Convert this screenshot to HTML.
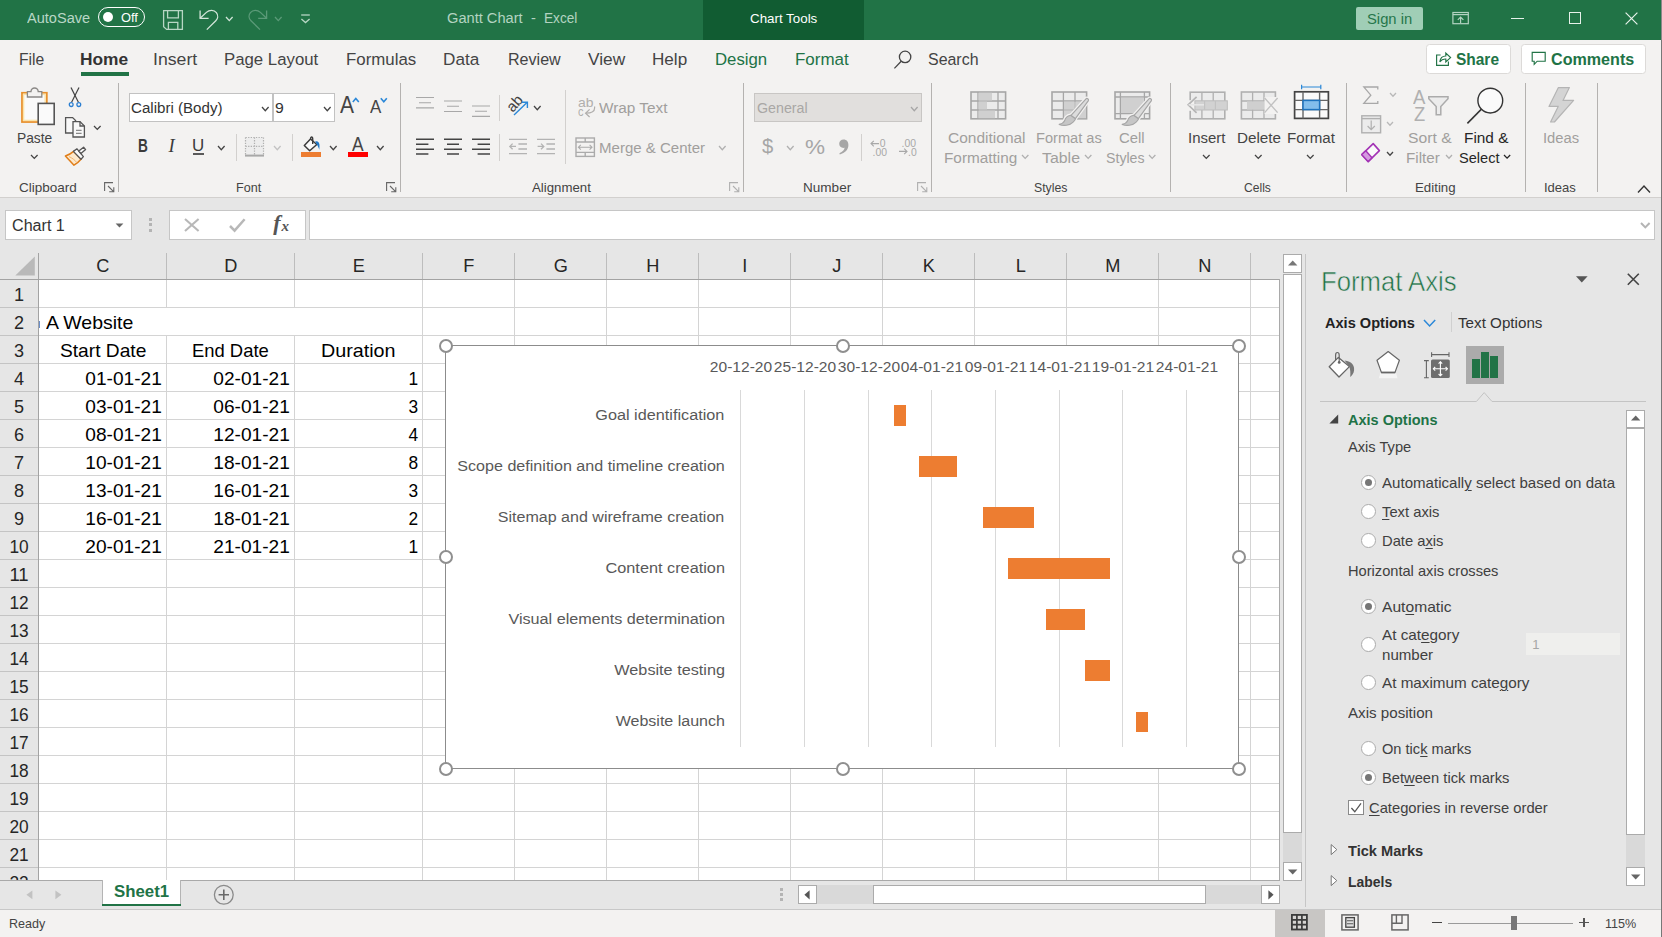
<!DOCTYPE html>
<html lang="en"><head><meta charset="utf-8"><title>Gantt Chart - Excel</title>
<style>
html,body{margin:0;padding:0;}
body{width:1662px;height:937px;overflow:hidden;position:relative;background:#e6e6e6;font-family:"Liberation Sans",sans-serif;}
.a{position:absolute;box-sizing:border-box;}
.t{position:absolute;white-space:nowrap;}
svg{overflow:visible;}
u{text-decoration:underline;text-underline-offset:2px;text-decoration-thickness:1px;}
</style></head>
<body>
<div class="a titlebar" style="left:0px;top:0px;width:1662px;height:40px;background:#217346;">
<span class="t" style="top:10px;font-size:14.9px;line-height:16px;color:#b9d7c6;left:26.68px;transform-origin:0 0;transform:scaleX(0.9778);">AutoSave</span>
<div class="a" style="left:97.8px;top:7px;width:47.2px;height:20.2px;border:1.4px solid #fff;border-radius:10.1px;"></div>
<div class="a" style="left:102.9px;top:11.9px;width:10.2px;height:10.2px;background:#fff;border-radius:5.1px;"></div>
<span class="t" style="top:10px;font-size:12.9px;line-height:15px;color:#fff;left:121.25px;transform-origin:0 0;transform:scaleX(0.9961);">Off</span>
<svg class="a" style="left:162px;top:9px;" width="22" height="22" viewBox="0 0 22 22"><g fill="none" stroke="#b7d6c4" stroke-width="1.3"><path d="M1.6 1.6 H20.4 V20.4 H4.6 L1.6 17.8 Z"/><path d="M5.6 1.6 V8.8 H16.4 V1.6"/><path d="M6.4 20.4 V13.4 H15.8 V20.4"/></g></svg>
<svg class="a" style="left:198px;top:9px;" width="22" height="22" viewBox="0 0 22 22"><g fill="none" stroke="#d3e6da" stroke-width="1.3"><path d="M2.1 1.4 V9.3 H10.6"/><path d="M2.1 9.3 L8.4 3.4 C11.4 0.6 16 0.6 18.4 3.6 C20.4 6.2 20 9.6 17.8 11.8 L8.8 20.6"/></g></svg>
<svg class="a" style="left:225.1px;top:15.6px;" width="8.6" height="5.6" viewBox="0 0 8.6 5.6"><path d="M1 1 L4.3 4.6 L7.6 1" fill="none" stroke="#d3e6da" stroke-width="1.3"/></svg>
<svg class="a" style="left:248px;top:9px;" width="22" height="22" viewBox="0 0 22 22"><g fill="none" stroke="#5b9a78" stroke-width="1.3"><path d="M18.6 1.4 V9.3 H10.2"/><path d="M18.6 9.3 L12.4 3.4 C9.4 0.6 4.8 0.6 2.4 3.6 C0.4 6.2 0.8 9.6 3 11.8 L12 20.6"/></g></svg>
<svg class="a" style="left:274.2px;top:15.6px;" width="8.6" height="5.6" viewBox="0 0 8.6 5.6"><path d="M1 1 L4.3 4.6 L7.6 1" fill="none" stroke="#5b9a78" stroke-width="1.3"/></svg>
<svg class="a" style="left:299px;top:13px;" width="14" height="12" viewBox="0 0 14 12"><g fill="none" stroke="#b7d6c4" stroke-width="1.3"><path d="M2.2 2 H10.8"/><path d="M2.4 6 L6.5 9.6 L10.6 6"/></g></svg>
<span class="t" style="top:10px;font-size:14.9px;line-height:16px;color:#b3d3c1;left:446.68px;transform-origin:0 0;transform:scaleX(0.9826);">Gantt Chart</span>
<span class="t" style="top:10px;font-size:14.9px;line-height:16px;color:#b3d3c1;left:530.7px;transform-origin:0 0;transform:scaleX(0.9854);">-</span>
<span class="t" style="top:10px;font-size:14.9px;line-height:16px;color:#b3d3c1;left:544.38px;transform-origin:0 0;transform:scaleX(0.9155);">Excel</span>
<div class="a" style="left:703px;top:0px;width:161px;height:40px;background:#115c32;"></div>
<span class="t" style="top:11px;font-size:12.9px;line-height:15px;color:#fff;left:749.95px;transform-origin:0 0;transform:scaleX(1.0359);">Chart Tools</span>
<div class="a" style="left:1356px;top:6.8px;width:67px;height:23.1px;background:#a0ceb6;border-radius:2px;"></div>
<span class="t" style="top:10px;font-size:15.3px;line-height:17px;color:#26774b;left:1366.76px;transform-origin:0 0;transform:scaleX(0.9656);">Sign in</span>
<svg class="a" style="left:1451px;top:11px;" width="19" height="15" viewBox="0 0 19 15"><g fill="none" stroke="#b3d3c1" stroke-width="1.2"><rect x="1.9" y="1.5" width="15.4" height="11.2"/><path d="M1.9 3.6 H17.3"/><path d="M9.6 12 V6.2 M6.8 8.8 L9.6 6 L12.4 8.8"/></g></svg>
<div class="a" style="left:1511px;top:17.5px;width:13px;height:1.2px;background:#e6f1ea;"></div>
<div class="a" style="left:1568.5px;top:12px;width:12px;height:12px;border:1.2px solid #e6f1ea;"></div>
<svg class="a" style="left:1625px;top:11.5px;" width="13" height="13" viewBox="0 0 13 13"><path d="M0.6 0.6 L12.4 12.4 M12.4 0.6 L0.6 12.4" stroke="#e6f1ea" stroke-width="1.2" fill="none"/></svg>
<div class="a" style="left:1661px;top:0px;width:1px;height:40px;background:#8c888a;"></div>
</div>
<div class="a ribbon" style="left:0px;top:40px;width:1662px;height:157px;background:#f3f2f1;">
<span class="t" style="top:9px;font-size:17.2px;line-height:20px;color:#444;left:19.4px;transform-origin:0 0;transform:scaleX(0.9098);">File</span>
<span class="t" style="top:9px;font-size:17.2px;line-height:20px;color:#333;font-weight:bold;left:80.4px;transform-origin:0 0;transform:scaleX(1.0092);">Home</span>
<div class="a" style="left:81px;top:32px;width:48px;height:3.6px;background:#217346;"></div>
<span class="t" style="top:9px;font-size:17.2px;line-height:20px;color:#444;left:153.4px;transform-origin:0 0;transform:scaleX(1.0280);">Insert</span>
<span class="t" style="top:9px;font-size:17.2px;line-height:20px;color:#444;left:224.4px;transform-origin:0 0;transform:scaleX(0.9759);">Page Layout</span>
<span class="t" style="top:9px;font-size:17.2px;line-height:20px;color:#444;left:346.4px;transform-origin:0 0;transform:scaleX(0.9799);">Formulas</span>
<span class="t" style="top:9px;font-size:17.2px;line-height:20px;color:#444;left:443.4px;transform-origin:0 0;transform:scaleX(0.9970);">Data</span>
<span class="t" style="top:9px;font-size:17.2px;line-height:20px;color:#444;left:507.9px;transform-origin:0 0;transform:scaleX(0.9351);">Review</span>
<span class="t" style="top:9px;font-size:17.2px;line-height:20px;color:#444;left:588.4px;transform-origin:0 0;transform:scaleX(1.0068);">View</span>
<span class="t" style="top:9px;font-size:17.2px;line-height:20px;color:#444;left:652.4px;transform-origin:0 0;transform:scaleX(0.9956);">Help</span>
<span class="t" style="top:9px;font-size:17.2px;line-height:20px;color:#217346;left:715.4px;transform-origin:0 0;transform:scaleX(0.9755);">Design</span>
<span class="t" style="top:9px;font-size:17.2px;line-height:20px;color:#217346;left:794.9px;transform-origin:0 0;transform:scaleX(0.9865);">Format</span>
<svg class="a" style="left:893px;top:10px;" width="20" height="20" viewBox="0 0 20 20"><g fill="none" stroke="#444" stroke-width="1.3"><circle cx="12.1" cy="6.9" r="5.7"/><path d="M8.2 11.2 L1.4 18.4"/></g></svg>
<span class="t" style="top:9px;font-size:17.2px;line-height:20px;color:#444;left:928.1px;transform-origin:0 0;transform:scaleX(0.9272);">Search</span>
<div class="a" style="left:1426px;top:4px;width:85px;height:30px;background:#fff;border:1px solid #dcdad8;border-radius:3.5px;"></div>
<svg class="a" style="left:1435px;top:10.4px;" width="17" height="17" viewBox="0 0 17 17"><g fill="none" stroke="#217346" stroke-width="1.15"><path d="M5.6 5 H1.6 V15.4 H13.4 V11.6"/><path d="M4.8 11.8 C5.4 7.8 8 6 10.8 6 V3 L15.6 7.6 L10.8 12 V9 C8.4 8.8 6.4 9.6 4.8 11.8 Z"/></g></svg>
<span class="t" style="top:9px;font-size:17.2px;line-height:20px;color:#217346;font-weight:bold;left:1456.4px;transform-origin:0 0;transform:scaleX(0.9000);">Share</span>
<div class="a" style="left:1521px;top:4px;width:125px;height:30px;background:#fff;border:1px solid #dcdad8;border-radius:3.5px;"></div>
<svg class="a" style="left:1531px;top:11.4px;" width="17" height="16" viewBox="0 0 17 16"><path d="M1.2 1.4 H14.2 V10.2 H6.2 L3.2 13.4 V10.2 H1.2 Z" fill="none" stroke="#217346" stroke-width="1.15"/></svg>
<span class="t" style="top:9px;font-size:17.2px;line-height:20px;color:#217346;font-weight:bold;left:1551.4px;transform-origin:0 0;transform:scaleX(0.9367);">Comments</span>
<div class="a" style="left:118px;top:43px;width:1px;height:109px;background:#b4b2b0;"></div>
<div class="a" style="left:400px;top:43px;width:1px;height:109px;background:#b4b2b0;"></div>
<div class="a" style="left:743px;top:43px;width:1px;height:109px;background:#b4b2b0;"></div>
<div class="a" style="left:931px;top:43px;width:1px;height:109px;background:#b4b2b0;"></div>
<div class="a" style="left:1170px;top:43px;width:1px;height:109px;background:#b4b2b0;"></div>
<div class="a" style="left:1346px;top:43px;width:1px;height:109px;background:#b4b2b0;"></div>
<div class="a" style="left:1525px;top:43px;width:1px;height:109px;background:#b4b2b0;"></div>
<div class="a" style="left:1597px;top:43px;width:1px;height:109px;background:#b4b2b0;"></div>
<span class="t" style="top:140px;font-size:12.9px;line-height:15px;color:#444;left:19.05px;transform-origin:0 0;transform:scaleX(1.0492);">Clipboard</span>
<span class="t" style="top:140px;font-size:12.9px;line-height:15px;color:#444;left:236.05px;transform-origin:0 0;transform:scaleX(0.9770);">Font</span>
<span class="t" style="top:140px;font-size:12.9px;line-height:15px;color:#444;left:531.55px;transform-origin:0 0;transform:scaleX(1.0275);">Alignment</span>
<span class="t" style="top:140px;font-size:12.9px;line-height:15px;color:#444;left:802.95px;transform-origin:0 0;transform:scaleX(1.0511);">Number</span>
<span class="t" style="top:140px;font-size:12.9px;line-height:15px;color:#444;left:1033.55px;transform-origin:0 0;transform:scaleX(0.9542);">Styles</span>
<span class="t" style="top:140px;font-size:12.9px;line-height:15px;color:#444;left:1244.15px;transform-origin:0 0;transform:scaleX(0.9388);">Cells</span>
<span class="t" style="top:140px;font-size:12.9px;line-height:15px;color:#444;left:1414.55px;transform-origin:0 0;transform:scaleX(1.0300);">Editing</span>
<span class="t" style="top:140px;font-size:12.9px;line-height:15px;color:#444;left:1544.15px;transform-origin:0 0;transform:scaleX(1.0113);">Ideas</span>
<svg class="a" style="left:103.5px;top:142px;" width="11" height="11" viewBox="0 0 11 11"><g fill="none" stroke="#666" stroke-width="1.1"><path d="M0.6 9 V0.6 H9"/><path d="M4 4 L9.6 9.6 M9.8 5.2 V9.8 H5.2"/></g></svg>
<svg class="a" style="left:385.8px;top:142px;" width="11" height="11" viewBox="0 0 11 11"><g fill="none" stroke="#666" stroke-width="1.1"><path d="M0.6 9 V0.6 H9"/><path d="M4 4 L9.6 9.6 M9.8 5.2 V9.8 H5.2"/></g></svg>
<svg class="a" style="left:728.8px;top:142px;" width="11" height="11" viewBox="0 0 11 11"><g fill="none" stroke="#b0b0b0" stroke-width="1.1"><path d="M0.6 9 V0.6 H9"/><path d="M4 4 L9.6 9.6 M9.8 5.2 V9.8 H5.2"/></g></svg>
<svg class="a" style="left:916.6px;top:142px;" width="11" height="11" viewBox="0 0 11 11"><g fill="none" stroke="#b0b0b0" stroke-width="1.1"><path d="M0.6 9 V0.6 H9"/><path d="M4 4 L9.6 9.6 M9.8 5.2 V9.8 H5.2"/></g></svg>
<svg class="a" style="left:1637px;top:144px;" width="15" height="10" viewBox="0 0 15 10"><path d="M1 8.4 L7 2 L13 8.4" fill="none" stroke="#333" stroke-width="1.4"/></svg>
<svg class="a" style="left:19px;top:42px;" width="38" height="45" viewBox="0 0 38 45"><rect x="3" y="10.8" width="24.8" height="29.2" fill="#fafafa" stroke="#e8912d" stroke-width="1.8"/><rect x="4.6" y="12.4" width="21.6" height="26" fill="none" stroke="#fbe3a8" stroke-width="1.4"/><path d="M8.4 15 V9.6 H12 A3.6 3.6 0 0 1 19.2 9.6 H22.8 V15 Z" fill="#f3f2f1" stroke="#8a8886" stroke-width="1.3"/><rect x="19.2" y="21.4" width="16" height="21" fill="#fafafa" stroke="#555" stroke-width="1.6"/></svg>
<span class="t" style="top:89px;font-size:15.2px;line-height:17px;color:#444;left:16.77px;transform-origin:0 0;transform:scaleX(0.9078);">Paste</span>
<svg class="a" style="left:30.1px;top:113.7px;" width="8.6" height="5.4" viewBox="0 0 8.6 5.4"><path d="M1 1 L4.3 4.4 L7.6 1" fill="none" stroke="#444" stroke-width="1.3"/></svg>
<svg class="a" style="left:67px;top:46px;" width="16" height="23" viewBox="0 0 16 23"><g fill="none" stroke="#444" stroke-width="1.2"><path d="M4 1.6 L11.4 16.2"/><path d="M12 1.6 L4.6 16.2"/></g><g fill="#f3f2f1" stroke="#2b7fd1" stroke-width="1.3"><circle cx="4.2" cy="18.6" r="1.9"/><circle cx="11.8" cy="18.6" r="1.9"/></g></svg>
<svg class="a" style="left:64px;top:76px;" width="23" height="23" viewBox="0 0 23 23"><g fill="#f8f8f8" stroke="#555" stroke-width="1.3"><path d="M1.6 1.6 H8.6 L11.6 4.6 V17 H1.6 Z"/><path d="M9 5.6 H16 L20.4 10 V21 H9 Z"/><path d="M16 5.6 V10 H20.4" fill="none"/><path d="M12 14.4 H17.6 M12 17.4 H17.6" stroke="#888"/></g></svg>
<svg class="a" style="left:93.2px;top:84.9px;" width="8.6" height="5.4" viewBox="0 0 8.6 5.4"><path d="M1 1 L4.3 4.4 L7.6 1" fill="none" stroke="#444" stroke-width="1.3"/></svg>
<svg class="a" style="left:64px;top:106px;" width="23" height="21" viewBox="0 0 23 21"><path d="M1.4 10 C5 8.8 7.6 7.2 9.6 5.4 L17.2 13 C15.4 15.2 12.8 17.6 10 19.2 Z" fill="#fde9cc" stroke="#e07e1a" stroke-width="1.5" stroke-linejoin="round"/><path d="M5 10.6 C8 12 11 14 12.6 16.4" fill="none" stroke="#f3b56e" stroke-width="1"/><path d="M9.4 5.4 L13 2.8 L19.4 10.6 L17 13.2 Z" fill="#fafafa" stroke="#555" stroke-width="1.3" stroke-linejoin="round"/><path d="M14.8 5 L19.6 1.2 L21.6 3.6 L16.9 7.6 Z" fill="#fafafa" stroke="#555" stroke-width="1.3" stroke-linejoin="round"/></svg>
<div class="a" style="left:129.2px;top:53.2px;width:143.6px;height:28.4px;background:#fff;border:1px solid #c2c2c2;"></div>
<div class="a" style="left:273.3px;top:53.2px;width:61.6px;height:28.4px;background:#fff;border:1px solid #c2c2c2;"></div>
<span class="t" style="top:59px;font-size:15.4px;line-height:17px;color:#333;left:131.46px;transform-origin:0 0;transform:scaleX(0.9812);">Calibri (Body)</span>
<span class="t" style="top:59px;font-size:15.4px;line-height:17px;color:#333;left:275.46px;transform-origin:0 0;transform:scaleX(1.0252);">9</span>
<svg class="a" style="left:260.9px;top:65.55px;" width="8.6" height="5.7" viewBox="0 0 8.6 5.7"><path d="M1 1 L4.3 4.7 L7.6 1" fill="none" stroke="#444" stroke-width="1.3"/></svg>
<svg class="a" style="left:323.1px;top:65.55px;" width="8.6" height="5.7" viewBox="0 0 8.6 5.7"><path d="M1 1 L4.3 4.7 L7.6 1" fill="none" stroke="#444" stroke-width="1.3"/></svg>
<span class="t" style="top:52px;font-size:23.2px;line-height:26px;color:#444;left:340.2px;transform-origin:0 0;transform:scaleX(0.9051);">A</span>
<svg class="a" style="left:352.2px;top:57px;" width="8" height="6" viewBox="0 0 8 6"><path d="M0.8 4.9 L3.8 1.4 L6.8 4.9" fill="none" stroke="#2b88d8" stroke-width="1.6"/></svg>
<span class="t" style="top:57px;font-size:17.8px;line-height:20px;color:#444;left:370px;transform-origin:0 0;transform:scaleX(0.9516);">A</span>
<svg class="a" style="left:380.2px;top:57px;" width="8" height="6" viewBox="0 0 8 6"><path d="M0.8 1.3 L3.8 4.8 L6.8 1.3" fill="none" stroke="#2b88d8" stroke-width="1.6"/></svg>
<span class="t" style="top:96px;font-size:17.8px;line-height:20px;color:#3b3b3b;font-weight:bold;left:138.37px;transform-origin:0 0;transform:scaleX(0.7683);">B</span>
<span class="t" style="top:95px;font-size:18.6px;line-height:21px;color:#3b3b3b;font-style:italic;font-family:'Liberation Serif', serif;left:168.4px;transform-origin:0 0;">I</span>
<span class="t" style="top:96px;font-size:16.5px;line-height:18px;color:#3b3b3b;left:192.08px;transform-origin:0 0;transform:scaleX(1.0267);">U</span>
<div class="a" style="left:192.7px;top:112.9px;width:11.4px;height:1.7px;background:#5a5a5a;"></div>
<svg class="a" style="left:217.2px;top:104.55px;" width="8.6" height="5.7" viewBox="0 0 8.6 5.7"><path d="M1 1 L4.3 4.7 L7.6 1" fill="none" stroke="#444" stroke-width="1.3"/></svg>
<div class="a" style="left:236px;top:94px;width:1px;height:27px;background:#d2d0ce;"></div>
<svg class="a" style="left:244px;top:96px;" width="22" height="22" viewBox="0 0 22 22"><rect x="1.5" y="1.5" width="18" height="17.4" fill="#ededed"/><g fill="none" stroke="#b0b0b0" stroke-width="1.2" stroke-dasharray="1.3 1.3"><path d="M1.5 1.5 H19.5 M1.5 1.5 V19 M19.5 1.5 V19 M10.5 1.5 V19 M1.5 10.4 H19.5"/></g><path d="M1 19.6 H20" stroke="#a8a8a8" stroke-width="2"/></svg>
<svg class="a" style="left:273.2px;top:104.55px;" width="8.6" height="5.7" viewBox="0 0 8.6 5.7"><path d="M1 1 L4.3 4.7 L7.6 1" fill="none" stroke="#c2c2c2" stroke-width="1.3"/></svg>
<div class="a" style="left:292px;top:94px;width:1px;height:27px;background:#d2d0ce;"></div>
<svg class="a" style="left:301px;top:95px;" width="22" height="18" viewBox="0 0 22 18"><path d="M3.3 10.5 L9.5 4 L15.8 9.5 L8.7 15.8 Z" fill="#fafafa" stroke="#3b3b3b" stroke-width="1.5" stroke-linejoin="round"/><path d="M11.7 8.9 V3.8 C11.7 1.4 9.5 1.4 9.5 4.2" fill="none" stroke="#3b3b3b" stroke-width="1.4"/><path d="M14.2 6.4 C16.8 5.6 18.8 7.8 18.5 11 L18.3 14.8 C17.4 12.4 16.8 11 15.8 9.6 Z" fill="#1e78c8"/></svg>
<div class="a" style="left:301px;top:112px;width:20px;height:5px;background:#ed7d31;"></div>
<svg class="a" style="left:328.9px;top:104.55px;" width="8.6" height="5.7" viewBox="0 0 8.6 5.7"><path d="M1 1 L4.3 4.7 L7.6 1" fill="none" stroke="#444" stroke-width="1.3"/></svg>
<span class="t" style="top:93px;font-size:19.4px;line-height:22px;color:#444;left:352.4px;transform-origin:0 0;transform:scaleX(0.8966);">A</span>
<div class="a" style="left:348px;top:112px;width:20px;height:5px;background:#ff0000;"></div>
<svg class="a" style="left:375.9px;top:104.55px;" width="8.6" height="5.7" viewBox="0 0 8.6 5.7"><path d="M1 1 L4.3 4.7 L7.6 1" fill="none" stroke="#444" stroke-width="1.3"/></svg>
<svg class="a" style="left:416px;top:0px;" width="20" height="120" viewBox="0 0 20 120"><path d="M0 57.5 H18 M3 62.8 H15 M0 67.9 H18 " stroke="#a8a8a8" stroke-width="1.1" fill="none"/></svg>
<svg class="a" style="left:444px;top:0px;" width="20" height="120" viewBox="0 0 20 120"><path d="M0 61 H18 M3 66.3 H15 M0 71.5 H18 " stroke="#a8a8a8" stroke-width="1.1" fill="none"/></svg>
<svg class="a" style="left:472px;top:0px;" width="20" height="120" viewBox="0 0 20 120"><path d="M0 66 H18 M3 71.2 H15 M0 76.4 H18 " stroke="#a8a8a8" stroke-width="1.1" fill="none"/></svg>
<svg class="a" style="left:416px;top:0px;" width="20" height="120" viewBox="0 0 20 120"><path d="M0 99.3 H18 M0 104.2 H12.4 M0 109.2 H18 M0 114.1 H12.4 " stroke="#444" stroke-width="1.5" fill="none"/></svg>
<svg class="a" style="left:444px;top:0px;" width="20" height="120" viewBox="0 0 20 120"><path d="M0 99.3 H18 M3 104.2 H15 M0 109.2 H18 M3 114.1 H15 " stroke="#444" stroke-width="1.5" fill="none"/></svg>
<svg class="a" style="left:472px;top:0px;" width="20" height="120" viewBox="0 0 20 120"><path d="M0 99.3 H18 M5.6 104.2 H18 M0 109.2 H18 M5.6 114.1 H18 " stroke="#444" stroke-width="1.5" fill="none"/></svg>
<div class="a" style="left:499px;top:54.6px;width:1px;height:26px;background:#d2d0ce;"></div>
<div class="a" style="left:499px;top:94px;width:1px;height:27px;background:#d2d0ce;"></div>
<span class="t" style="top:58px;font-size:15px;line-height:17px;color:#444;left:514.68px;transform-origin:0 0;transform:rotate(-48deg);transform-origin:0 100%;">ab</span>
<svg class="a" style="left:512px;top:60px;" width="18" height="17" viewBox="0 0 18 17"><g fill="none" stroke="#2b88d8" stroke-width="1.4"><path d="M2 15 L15 2.6"/><path d="M9.6 2.2 H15.4 V8"/></g></svg>
<svg class="a" style="left:533.2px;top:64.55px;" width="8.6" height="5.7" viewBox="0 0 8.6 5.7"><path d="M1 1 L4.3 4.7 L7.6 1" fill="none" stroke="#444" stroke-width="1.3"/></svg>
<svg class="a" style="left:509px;top:98px;" width="19" height="17" viewBox="0 0 19 17"><g fill="none" stroke="#b3b3b3" stroke-width="1.3"><path d="M0 1.3 H18 M0 15.7 H18 M9.4 6 H18 M9.4 11 H18"/><path d="M7 8.4 H0.6 M3.6 5.6 L0.8 8.4 L3.6 11.2"/></g></svg>
<svg class="a" style="left:537px;top:98px;" width="19" height="17" viewBox="0 0 19 17"><g fill="none" stroke="#b3b3b3" stroke-width="1.3"><path d="M0 1.3 H18 M0 15.7 H18 M9.4 6 H18 M9.4 11 H18"/><path d="M0.6 8.4 H7 M4 5.6 L6.8 8.4 L4 11.2"/></g></svg>
<div class="a" style="left:565px;top:50px;width:1px;height:74px;background:#d2d0ce;"></div>
<span class="t" style="top:56px;font-size:12.6px;line-height:14px;color:#b0aeac;left:577.5px;transform-origin:0 0;transform:scaleX(1.1059);">ab</span>
<span class="t" style="top:65px;font-size:12.6px;line-height:14px;color:#b0aeac;left:577.5px;transform-origin:0 0;transform:scaleX(0.8734);">c</span>
<svg class="a" style="left:584px;top:65px;" width="13" height="13" viewBox="0 0 13 13"><g fill="none" stroke="#b0aeac" stroke-width="1.2"><path d="M10.6 1.6 V3 C10.6 6.8 7.6 8.2 1.8 8.2"/><path d="M5.6 4.4 L1.6 8.2 L5.6 12"/></g></svg>
<span class="t" style="top:59px;font-size:15.4px;line-height:17px;color:#a19f9d;left:598.86px;transform-origin:0 0;transform:scaleX(0.9965);">Wrap Text</span>
<svg class="a" style="left:574.5px;top:96.5px;" width="21" height="21" viewBox="0 0 21 21"><g fill="none" stroke="#ababab" stroke-width="1.4"><rect x="1" y="1" width="18.4" height="18.4"/><path d="M1 5 H19.4 M1 15.4 H19.4 M10.2 1 V5 M10.2 15.4 V19.4"/></g><g fill="none" stroke="#ababab" stroke-width="1.1"><path d="M3.4 10.2 H17 M5.8 7.8 L3.4 10.2 L5.8 12.6 M14.6 7.8 L17 10.2 L14.6 12.6"/></g></svg>
<span class="t" style="top:99px;font-size:15.4px;line-height:17px;color:#a19f9d;left:598.86px;transform-origin:0 0;transform:scaleX(0.9764);">Merge &amp; Center</span>
<svg class="a" style="left:718.1px;top:104.55px;" width="8.6" height="5.7" viewBox="0 0 8.6 5.7"><path d="M1 1 L4.3 4.7 L7.6 1" fill="none" stroke="#b0b0b0" stroke-width="1.3"/></svg>
<div class="a" style="left:754.3px;top:53.2px;width:168px;height:28.4px;background:#e1dfdd;border:1px solid #c8c6c4;"></div>
<span class="t" style="top:59px;font-size:15.4px;line-height:17px;color:#a9a7a5;left:756.86px;transform-origin:0 0;transform:scaleX(0.9254);">General</span>
<svg class="a" style="left:910.3px;top:65.55px;" width="8.6" height="5.7" viewBox="0 0 8.6 5.7"><path d="M1 1 L4.3 4.7 L7.6 1" fill="none" stroke="#a6a6a6" stroke-width="1.3"/></svg>
<span class="t" style="top:95px;font-size:20px;line-height:22px;color:#a6a6a6;left:761.8px;transform-origin:0 0;transform:scaleX(1.0157);">$</span>
<svg class="a" style="left:786.1px;top:104.55px;" width="8.6" height="5.7" viewBox="0 0 8.6 5.7"><path d="M1 1 L4.3 4.7 L7.6 1" fill="none" stroke="#b0b0b0" stroke-width="1.3"/></svg>
<span class="t" style="top:95px;font-size:21px;line-height:23px;color:#a6a6a6;left:804.87px;transform-origin:0 0;transform:scaleX(1.0734);">%</span>
<svg class="a" style="left:838px;top:99px;" width="12" height="17" viewBox="0 0 12 17"><path d="M5.6 0.6 C8.6 0.6 10.4 2.8 10.4 6 C10.4 10.6 7 14 1.8 15.4 L1.4 14.2 C4.6 12.8 6.4 11 6.6 8.8 C3.6 9.4 1.2 7.6 1.2 4.8 C1.2 2.4 3 0.6 5.6 0.6 Z" fill="#a6a6a6"/></svg>
<div class="a" style="left:861px;top:94px;width:1px;height:27px;background:#d2d0ce;"></div>
<svg class="a" style="left:869.5px;top:97px;" width="21" height="20" viewBox="0 0 21 20"><g fill="none" stroke="#a8a8a8" stroke-width="1.1"><path d="M1 6.6 H9 M3.8 3.8 L1 6.6 L3.8 9.4"/></g></svg>
<span class="t" style="top:98px;font-size:10.4px;line-height:11px;color:#a8a8a8;left:879.8px;transform-origin:0 0;">0</span>
<span class="t" style="top:107px;font-size:10.4px;line-height:11px;color:#a8a8a8;left:872.6px;transform-origin:0 0;">.00</span>
<svg class="a" style="left:897.5px;top:97px;" width="21" height="20" viewBox="0 0 21 20"><g fill="none" stroke="#a8a8a8" stroke-width="1.1"><path d="M1 14.4 H9 M6.2 11.6 L9 14.4 L6.2 17.2"/></g></svg>
<span class="t" style="top:98px;font-size:10.4px;line-height:11px;color:#a8a8a8;left:901.6px;transform-origin:0 0;">.00</span>
<span class="t" style="top:107px;font-size:10.4px;line-height:11px;color:#a8a8a8;left:908px;transform-origin:0 0;">.0</span>
<svg class="a" style="left:970px;top:50.5px;" width="37" height="29" viewBox="0 0 37 29"><rect x="1" y="1" width="34.6" height="26.8" fill="#ebebeb" stroke="#a6a6a6" stroke-width="1.6"/><path d="M1 10 H35.6 M1 19 H35.6 M8 1 V27.8 M28 1 V27.8" stroke="#a6a6a6" stroke-width="1.3" fill="none"/><rect x="8.6" y="1.8" width="13.4" height="7.6" fill="#d0d0d0"/><rect x="8.6" y="10.6" width="8.4" height="7.8" fill="#d0d0d0"/><rect x="8.6" y="19.6" width="16.4" height="7.6" fill="#d0d0d0"/></svg>
<span class="t" style="top:89px;font-size:15.4px;line-height:17px;color:#a19f9d;left:948.36px;transform-origin:0 0;transform:scaleX(1.0073);">Conditional</span>
<span class="t" style="top:109px;font-size:15.4px;line-height:17px;color:#a19f9d;left:943.76px;transform-origin:0 0;transform:scaleX(0.9961);">Formatting</span>
<svg class="a" style="left:1021.2px;top:113.9px;" width="8.4" height="5.4" viewBox="0 0 8.4 5.4"><path d="M1 1 L4.2 4.4 L7.4 1" fill="none" stroke="#b0b0b0" stroke-width="1.3"/></svg>
<svg class="a" style="left:1050.5px;top:50.5px;" width="42" height="38" viewBox="0 0 42 38"><rect x="1" y="1" width="34.6" height="26.8" fill="#ebebeb" stroke="#a6a6a6" stroke-width="1.6"/><path d="M1 10 H35.6 M1 19 H35.6 M12.4 1 V27.8 M24 1 V27.8" stroke="#a6a6a6" stroke-width="1.3" fill="none"/><rect x="13" y="10.6" width="10.4" height="7.8" fill="#d0d0d0"/><rect x="24.6" y="10.6" width="10.4" height="16.6" fill="#d0d0d0"/><rect x="13" y="19.6" width="10.4" height="7.6" fill="#d0d0d0"/><g transform="translate(-1.6 -0.8)"><path d="M36.6 8.6 C37.6 7.6 39.6 9 39 10.4 L25.8 28.6 L21.6 25.2 Z" fill="none" stroke="#f3f2f1" stroke-width="3.6" stroke-linejoin="round"/><path d="M21.2 25 C18 25.6 15.8 28 15.2 30.6 C14 33 12 33.8 9.8 34.2 C14 36 20.4 35.4 23.4 32.2 C24.8 30.8 25.8 29.4 26 28.6 Z" fill="none" stroke="#f3f2f1" stroke-width="3.6" stroke-linejoin="round"/><path d="M36.6 8.6 C37.6 7.6 39.6 9 39 10.4 L25.8 28.6 L21.6 25.2 Z" fill="#dcdcdc" stroke="#a6a6a6" stroke-width="1.2" stroke-linejoin="round"/><path d="M21.2 25 C18 25.6 15.8 28 15.2 30.6 C14 33 12 33.8 9.8 34.2 C14 36 20.4 35.4 23.4 32.2 C24.8 30.8 25.8 29.4 26 28.6 Z" fill="#c6c6c6" stroke="#a6a6a6" stroke-width="1.1" stroke-linejoin="round"/></g></svg>
<span class="t" style="top:89px;font-size:15.4px;line-height:17px;color:#a19f9d;left:1035.66px;transform-origin:0 0;transform:scaleX(0.9480);">Format as</span>
<span class="t" style="top:109px;font-size:15.4px;line-height:17px;color:#a19f9d;left:1042.16px;transform-origin:0 0;transform:scaleX(1.0321);">Table</span>
<svg class="a" style="left:1084.2px;top:113.9px;" width="8.4" height="5.4" viewBox="0 0 8.4 5.4"><path d="M1 1 L4.2 4.4 L7.4 1" fill="none" stroke="#b0b0b0" stroke-width="1.3"/></svg>
<svg class="a" style="left:1113.7px;top:50.5px;" width="42" height="38" viewBox="0 0 42 38"><rect x="1" y="1" width="34.6" height="26.8" fill="#ebebeb" stroke="#a6a6a6" stroke-width="1.6"/><path d="M1 6 H35.6 M1 22.6 H35.6 M6.4 1 V27.8 M30.4 1 V27.8" stroke="#a6a6a6" stroke-width="1.3" fill="none"/><rect x="7" y="6.6" width="22.8" height="15.4" fill="#d0d0d0"/><g transform="translate(-1.6 -0.8)"><path d="M36.6 8.6 C37.6 7.6 39.6 9 39 10.4 L25.8 28.6 L21.6 25.2 Z" fill="none" stroke="#f3f2f1" stroke-width="3.6" stroke-linejoin="round"/><path d="M21.2 25 C18 25.6 15.8 28 15.2 30.6 C14 33 12 33.8 9.8 34.2 C14 36 20.4 35.4 23.4 32.2 C24.8 30.8 25.8 29.4 26 28.6 Z" fill="none" stroke="#f3f2f1" stroke-width="3.6" stroke-linejoin="round"/><path d="M36.6 8.6 C37.6 7.6 39.6 9 39 10.4 L25.8 28.6 L21.6 25.2 Z" fill="#dcdcdc" stroke="#a6a6a6" stroke-width="1.2" stroke-linejoin="round"/><path d="M21.2 25 C18 25.6 15.8 28 15.2 30.6 C14 33 12 33.8 9.8 34.2 C14 36 20.4 35.4 23.4 32.2 C24.8 30.8 25.8 29.4 26 28.6 Z" fill="#c6c6c6" stroke="#a6a6a6" stroke-width="1.1" stroke-linejoin="round"/></g></svg>
<span class="t" style="top:89px;font-size:15.4px;line-height:17px;color:#a19f9d;left:1119.46px;transform-origin:0 0;transform:scaleX(0.9646);">Cell</span>
<span class="t" style="top:109px;font-size:15.4px;line-height:17px;color:#a19f9d;left:1105.76px;transform-origin:0 0;transform:scaleX(0.9202);">Styles</span>
<svg class="a" style="left:1148.2px;top:113.9px;" width="8.4" height="5.4" viewBox="0 0 8.4 5.4"><path d="M1 1 L4.2 4.4 L7.4 1" fill="none" stroke="#b0b0b0" stroke-width="1.3"/></svg>
<svg class="a" style="left:1186.5px;top:50.5px;" width="42" height="29" viewBox="0 0 42 29"><rect x="3.2" y="1.2" width="34.6" height="26.6" fill="#ececec" stroke="#b0b0b0" stroke-width="1.6"/><path d="M14.9 1.2 V27.8 M26.2 1.2 V27.8" stroke="#b0b0b0" stroke-width="1.3" fill="none"/><rect x="1.4" y="9.2" width="7" height="10.6" fill="#f3f2f1"/><rect x="7.9" y="9.8" width="32.4" height="9.2" fill="#d2d2d2" stroke="#bcbcbc" stroke-width="1"/><path d="M17.6 10 V18.8 M28.4 10 V18.8" stroke="#c2c2c2" stroke-width="1.2"/><path d="M9.6 5.8 L1.2 13.8 L9.6 21.8" fill="none" stroke="#b5b5b5" stroke-width="1.7"/><path d="M1.6 13.8 H17" stroke="#e6e6e6" stroke-width="1.6"/></svg>
<span class="t" style="top:89px;font-size:15.4px;line-height:17px;color:#444;left:1188.16px;transform-origin:0 0;transform:scaleX(0.9709);">Insert</span>
<svg class="a" style="left:1202px;top:113.9px;" width="8.6" height="5.4" viewBox="0 0 8.6 5.4"><path d="M1 1 L4.3 4.4 L7.6 1" fill="none" stroke="#444" stroke-width="1.3"/></svg>
<svg class="a" style="left:1240px;top:50.5px;" width="40" height="29" viewBox="0 0 40 29"><rect x="1.4" y="1" width="34" height="26.8" fill="#ebebeb" stroke="#b0b0b0" stroke-width="1.6"/><path d="M1.4 10 H35.4 M1.4 19 H35.4 M12.6 1 V27.8 M24 1 V27.8" stroke="#b0b0b0" stroke-width="1.3" fill="none"/><rect x="7" y="10.4" width="17" height="8.2" fill="#cfcfcf"/><path d="M24 9.6 L28.4 14.4 L24 19.2 Z" fill="#cfcfcf"/><rect x="24.6" y="6" width="13" height="17" fill="#f3f2f1"/><path d="M24.6 7 L37.6 21.6 M37.6 7 L24.6 21.6" fill="none" stroke="#c2c2c2" stroke-width="1.4"/></svg>
<span class="t" style="top:89px;font-size:15.4px;line-height:17px;color:#444;left:1237.16px;transform-origin:0 0;transform:scaleX(0.9905);">Delete</span>
<svg class="a" style="left:1254px;top:113.9px;" width="8.6" height="5.4" viewBox="0 0 8.6 5.4"><path d="M1 1 L4.3 4.4 L7.6 1" fill="none" stroke="#444" stroke-width="1.3"/></svg>
<svg class="a" style="left:1292.5px;top:44px;" width="38" height="36" viewBox="0 0 38 36"><path d="M8.6 3 H27.8 M8.6 0.8 V5.2 M27.8 0.8 V5.2" stroke="#2b88d8" stroke-width="1.2" fill="none"/><rect x="1.6" y="7.8" width="33.8" height="26.6" fill="#fafafa" stroke="#444" stroke-width="1.7"/><path d="M1.6 16.4 H35.4 M1.6 25.6 H35.4 M10 7.8 V34.4 M26.6 7.8 V34.4" stroke="#666" stroke-width="1.4" fill="none"/><rect x="10" y="16.4" width="16.6" height="9.2" fill="#83beec" stroke="#1e73be" stroke-width="1.5"/></svg>
<span class="t" style="top:89px;font-size:15.4px;line-height:17px;color:#444;left:1286.66px;transform-origin:0 0;transform:scaleX(0.9821);">Format</span>
<svg class="a" style="left:1306px;top:113.9px;" width="8.6" height="5.4" viewBox="0 0 8.6 5.4"><path d="M1 1 L4.3 4.4 L7.6 1" fill="none" stroke="#444" stroke-width="1.3"/></svg>
<svg class="a" style="left:1362px;top:46px;" width="18" height="19" viewBox="0 0 18 19"><path d="M15.8 3.4 V1 H1.8 L8.8 9.2 L1.8 17.4 H15.8 V15" fill="none" stroke="#a8a8a8" stroke-width="1.3"/></svg>
<svg class="a" style="left:1389.4px;top:52.4px;" width="8" height="5.2" viewBox="0 0 8 5.2"><path d="M1 1 L4 4.2 L7 1" fill="none" stroke="#b8b8b8" stroke-width="1.3"/></svg>
<svg class="a" style="left:1360.5px;top:74.5px;" width="21" height="19" viewBox="0 0 21 19"><rect x="0.8" y="0.8" width="18.8" height="17" fill="#ececec" stroke="#b0b0b0" stroke-width="1.4"/><path d="M0.8 3.6 H19.6" stroke="#b0b0b0" stroke-width="1.4"/><path d="M10.2 5.6 V14.6 M6.6 11 L10.2 14.6 L13.8 11" fill="none" stroke="#b0b0b0" stroke-width="1.2"/></svg>
<svg class="a" style="left:1386.4px;top:81.4px;" width="8" height="5.2" viewBox="0 0 8 5.2"><path d="M1 1 L4 4.2 L7 1" fill="none" stroke="#b8b8b8" stroke-width="1.3"/></svg>
<svg class="a" style="left:1360px;top:102px;" width="22" height="22" viewBox="0 0 22 22"><path d="M1.8 12.6 L13.2 1.6 L19.4 8.6 L8.2 19.6 Z" fill="#fafafa" stroke="#a333b5" stroke-width="1.6" stroke-linejoin="round"/><path d="M1.8 12.6 L5.8 8.8 L12 15.8 L8.2 19.6 Z" fill="#d59be0" stroke="#a333b5" stroke-width="1.4" stroke-linejoin="round"/></svg>
<svg class="a" style="left:1386.4px;top:111px;" width="8" height="5.2" viewBox="0 0 8 5.2"><path d="M1 1 L4 4.2 L7 1" fill="none" stroke="#444" stroke-width="1.3"/></svg>
<span class="t" style="top:45px;font-size:20.6px;line-height:23px;color:#b0b0b0;left:1413.4px;transform-origin:0 0;transform:scaleX(0.9018);">A</span>
<span class="t" style="top:62px;font-size:20.6px;line-height:23px;color:#b0b0b0;left:1413.6px;transform-origin:0 0;transform:scaleX(0.8893);">Z</span>
<svg class="a" style="left:1427px;top:55px;" width="23" height="22" viewBox="0 0 23 22"><path d="M1.8 1.8 H21 V3.8 L13.8 11.6 V19.8 H9.2 V11.6 L1.8 3.8 Z" fill="#ececec" stroke="#ababab" stroke-width="1.5"/></svg>
<span class="t" style="top:89px;font-size:15.4px;line-height:17px;color:#a19f9d;left:1408.46px;transform-origin:0 0;transform:scaleX(1.0210);">Sort &amp;</span>
<span class="t" style="top:109px;font-size:15.4px;line-height:17px;color:#a19f9d;left:1406.46px;transform-origin:0 0;transform:scaleX(0.9876);">Filter</span>
<svg class="a" style="left:1444.6px;top:114px;" width="8" height="5.2" viewBox="0 0 8 5.2"><path d="M1 1 L4 4.2 L7 1" fill="none" stroke="#b0b0b0" stroke-width="1.3"/></svg>
<svg class="a" style="left:1465px;top:46px;" width="40" height="40" viewBox="0 0 40 40"><circle cx="25.3" cy="14.6" r="12.4" fill="#fafafa" stroke="#333" stroke-width="1.4"/><path d="M16.2 23.4 L2.4 37.4" stroke="#333" stroke-width="1.5" fill="none"/></svg>
<span class="t" style="top:89px;font-size:15.4px;line-height:17px;color:#262626;left:1463.76px;transform-origin:0 0;transform:scaleX(0.9976);">Find &amp;</span>
<span class="t" style="top:109px;font-size:15.4px;line-height:17px;color:#262626;left:1458.86px;transform-origin:0 0;transform:scaleX(0.9462);">Select</span>
<svg class="a" style="left:1503.3px;top:114px;" width="8.2" height="5.2" viewBox="0 0 8.2 5.2"><path d="M1 1 L4.1 4.2 L7.2 1" fill="none" stroke="#262626" stroke-width="1.3"/></svg>
<svg class="a" style="left:1546px;top:46px;" width="32" height="38" viewBox="0 0 32 38"><path d="M12.4 1.6 H23.4 L17 14.4 H27.6 L8.4 36 H4.6 L12.2 20.4 H3 Z" fill="#d4d4d4" stroke="#b4b4b4" stroke-width="1.2" stroke-linejoin="round"/></svg>
<span class="t" style="top:89px;font-size:15.4px;line-height:17px;color:#a19f9d;left:1543.16px;transform-origin:0 0;transform:scaleX(0.9607);">Ideas</span>
<div class="a" style="left:1661px;top:0px;width:1px;height:157px;background:#777;"></div>
</div>
<div class="a formulabar" style="left:0px;top:197px;width:1662px;height:56px;background:#e6e6e6;">
<div class="a" style="left:0px;top:0px;width:1661px;height:1px;background:#d2d0ce;"></div>
<div class="a" style="left:5px;top:13.3px;width:127.2px;height:29.4px;background:#fff;border:1px solid #c6c6c6;"></div>
<span class="t" style="top:20px;font-size:15.8px;line-height:17px;color:#333;left:12.15px;transform-origin:0 0;transform:scaleX(1.0192);">Chart 1</span>
<svg class="a" style="left:115px;top:26px;" width="9" height="5" viewBox="0 0 9 5"><path d="M0.6 0.6 H8.4 L4.5 4.4 Z" fill="#666"/></svg>
<div class="a" style="left:149.2px;top:21.2px;width:3px;height:3px;background:#b4b4b4;"></div>
<div class="a" style="left:149.2px;top:26.4px;width:3px;height:3px;background:#b4b4b4;"></div>
<div class="a" style="left:149.2px;top:31.6px;width:3px;height:3px;background:#b4b4b4;"></div>
<div class="a" style="left:169.2px;top:13.3px;width:136.8px;height:29.4px;background:#fff;border:1px solid #c6c6c6;"></div>
<svg class="a" style="left:184px;top:21px;" width="16" height="14" viewBox="0 0 16 14"><path d="M1 1 L14.6 13 M14.6 1 L1 13" stroke="#b8b8b8" stroke-width="2.1" fill="none"/></svg>
<svg class="a" style="left:229px;top:21px;" width="17" height="14" viewBox="0 0 17 14"><path d="M1 8 L5.6 12.6 L15.6 1.2" stroke="#b8b8b8" stroke-width="2.5" fill="none"/></svg>
<span class="t" style="top:13px;font-size:22px;line-height:25px;color:#555;font-style:italic;font-family:'Liberation Serif', serif;left:273.2px;transform-origin:0 0;font-weight:bold;">f</span>
<span class="t" style="top:21px;font-size:15px;line-height:16px;color:#555;font-style:italic;font-family:'Liberation Serif', serif;left:281.4px;transform-origin:0 0;font-weight:bold;">x</span>
<div class="a" style="left:309.3px;top:13.3px;width:1345.4px;height:29.4px;background:#fff;border:1px solid #c6c6c6;"></div>
<svg class="a" style="left:1639.5px;top:24.5px;" width="11" height="7" viewBox="0 0 11 7"><path d="M1 1 L5.3 5.4 L9.6 1" stroke="#b4b4b4" stroke-width="2" fill="none"/></svg>
<div class="a" style="left:1661px;top:0px;width:1px;height:56px;background:#777;"></div>
</div>
<div class="a sheet" style="left:0px;top:253px;width:1280px;height:628px;background:#fff;overflow:hidden;">
<div class="a" style="left:166px;top:27px;width:1px;height:600px;background:#d4d4d4;"></div>
<div class="a" style="left:294px;top:27px;width:1px;height:600px;background:#d4d4d4;"></div>
<div class="a" style="left:422px;top:27px;width:1px;height:600px;background:#d4d4d4;"></div>
<div class="a" style="left:514px;top:27px;width:1px;height:600px;background:#d4d4d4;"></div>
<div class="a" style="left:606px;top:27px;width:1px;height:600px;background:#d4d4d4;"></div>
<div class="a" style="left:698px;top:27px;width:1px;height:600px;background:#d4d4d4;"></div>
<div class="a" style="left:790px;top:27px;width:1px;height:600px;background:#d4d4d4;"></div>
<div class="a" style="left:882px;top:27px;width:1px;height:600px;background:#d4d4d4;"></div>
<div class="a" style="left:974px;top:27px;width:1px;height:600px;background:#d4d4d4;"></div>
<div class="a" style="left:1066px;top:27px;width:1px;height:600px;background:#d4d4d4;"></div>
<div class="a" style="left:1158px;top:27px;width:1px;height:600px;background:#d4d4d4;"></div>
<div class="a" style="left:1250px;top:27px;width:1px;height:600px;background:#d4d4d4;"></div>
<div class="a" style="left:39px;top:54px;width:1240px;height:1px;background:#d4d4d4;"></div>
<div class="a" style="left:39px;top:82px;width:1240px;height:1px;background:#d4d4d4;"></div>
<div class="a" style="left:39px;top:110px;width:1240px;height:1px;background:#d4d4d4;"></div>
<div class="a" style="left:39px;top:138px;width:1240px;height:1px;background:#d4d4d4;"></div>
<div class="a" style="left:39px;top:166px;width:1240px;height:1px;background:#d4d4d4;"></div>
<div class="a" style="left:39px;top:194px;width:1240px;height:1px;background:#d4d4d4;"></div>
<div class="a" style="left:39px;top:222px;width:1240px;height:1px;background:#d4d4d4;"></div>
<div class="a" style="left:39px;top:250px;width:1240px;height:1px;background:#d4d4d4;"></div>
<div class="a" style="left:39px;top:278px;width:1240px;height:1px;background:#d4d4d4;"></div>
<div class="a" style="left:39px;top:306px;width:1240px;height:1px;background:#d4d4d4;"></div>
<div class="a" style="left:39px;top:334px;width:1240px;height:1px;background:#d4d4d4;"></div>
<div class="a" style="left:39px;top:362px;width:1240px;height:1px;background:#d4d4d4;"></div>
<div class="a" style="left:39px;top:390px;width:1240px;height:1px;background:#d4d4d4;"></div>
<div class="a" style="left:39px;top:418px;width:1240px;height:1px;background:#d4d4d4;"></div>
<div class="a" style="left:39px;top:446px;width:1240px;height:1px;background:#d4d4d4;"></div>
<div class="a" style="left:39px;top:474px;width:1240px;height:1px;background:#d4d4d4;"></div>
<div class="a" style="left:39px;top:502px;width:1240px;height:1px;background:#d4d4d4;"></div>
<div class="a" style="left:39px;top:530px;width:1240px;height:1px;background:#d4d4d4;"></div>
<div class="a" style="left:39px;top:558px;width:1240px;height:1px;background:#d4d4d4;"></div>
<div class="a" style="left:39px;top:586px;width:1240px;height:1px;background:#d4d4d4;"></div>
<div class="a" style="left:39px;top:614px;width:1240px;height:1px;background:#d4d4d4;"></div>
<div class="a" style="left:39px;top:55px;width:383px;height:27px;background:#fff;"></div>
<div class="a" style="left:0px;top:0px;width:1280px;height:26px;background:#e6e6e6;"></div>
<div class="a" style="left:0px;top:26px;width:38px;height:601px;background:#e6e6e6;"></div>
<div class="a" style="left:166px;top:0px;width:1px;height:26px;background:#bdbdbd;"></div>
<div class="a" style="left:294px;top:0px;width:1px;height:26px;background:#bdbdbd;"></div>
<div class="a" style="left:422px;top:0px;width:1px;height:26px;background:#bdbdbd;"></div>
<div class="a" style="left:514px;top:0px;width:1px;height:26px;background:#bdbdbd;"></div>
<div class="a" style="left:606px;top:0px;width:1px;height:26px;background:#bdbdbd;"></div>
<div class="a" style="left:698px;top:0px;width:1px;height:26px;background:#bdbdbd;"></div>
<div class="a" style="left:790px;top:0px;width:1px;height:26px;background:#bdbdbd;"></div>
<div class="a" style="left:882px;top:0px;width:1px;height:26px;background:#bdbdbd;"></div>
<div class="a" style="left:974px;top:0px;width:1px;height:26px;background:#bdbdbd;"></div>
<div class="a" style="left:1066px;top:0px;width:1px;height:26px;background:#bdbdbd;"></div>
<div class="a" style="left:1158px;top:0px;width:1px;height:26px;background:#bdbdbd;"></div>
<div class="a" style="left:1250px;top:0px;width:1px;height:26px;background:#bdbdbd;"></div>
<div class="a" style="left:0px;top:54px;width:38px;height:1px;background:#c4c4c4;"></div>
<div class="a" style="left:0px;top:82px;width:38px;height:1px;background:#c4c4c4;"></div>
<div class="a" style="left:0px;top:110px;width:38px;height:1px;background:#c4c4c4;"></div>
<div class="a" style="left:0px;top:138px;width:38px;height:1px;background:#c4c4c4;"></div>
<div class="a" style="left:0px;top:166px;width:38px;height:1px;background:#c4c4c4;"></div>
<div class="a" style="left:0px;top:194px;width:38px;height:1px;background:#c4c4c4;"></div>
<div class="a" style="left:0px;top:222px;width:38px;height:1px;background:#c4c4c4;"></div>
<div class="a" style="left:0px;top:250px;width:38px;height:1px;background:#c4c4c4;"></div>
<div class="a" style="left:0px;top:278px;width:38px;height:1px;background:#c4c4c4;"></div>
<div class="a" style="left:0px;top:306px;width:38px;height:1px;background:#c4c4c4;"></div>
<div class="a" style="left:0px;top:334px;width:38px;height:1px;background:#c4c4c4;"></div>
<div class="a" style="left:0px;top:362px;width:38px;height:1px;background:#c4c4c4;"></div>
<div class="a" style="left:0px;top:390px;width:38px;height:1px;background:#c4c4c4;"></div>
<div class="a" style="left:0px;top:418px;width:38px;height:1px;background:#c4c4c4;"></div>
<div class="a" style="left:0px;top:446px;width:38px;height:1px;background:#c4c4c4;"></div>
<div class="a" style="left:0px;top:474px;width:38px;height:1px;background:#c4c4c4;"></div>
<div class="a" style="left:0px;top:502px;width:38px;height:1px;background:#c4c4c4;"></div>
<div class="a" style="left:0px;top:530px;width:38px;height:1px;background:#c4c4c4;"></div>
<div class="a" style="left:0px;top:558px;width:38px;height:1px;background:#c4c4c4;"></div>
<div class="a" style="left:0px;top:586px;width:38px;height:1px;background:#c4c4c4;"></div>
<div class="a" style="left:0px;top:614px;width:38px;height:1px;background:#c4c4c4;"></div>
<div class="a" style="left:0px;top:26px;width:1280px;height:1px;background:#a3a3a3;"></div>
<div class="a" style="left:38px;top:0px;width:1px;height:627px;background:#a3a3a3;"></div>
<div class="a" style="left:1279px;top:26px;width:1px;height:601px;background:#a9a9a9;"></div>
<svg class="a" style="left:15px;top:3px;" width="20" height="20" viewBox="0 0 20 20"><path d="M19.8 0.4 V19.4 H0.3 Z" fill="#b9b9b9"/></svg>
<span class="t" style="top:3px;font-size:18.2px;line-height:20px;color:#262626;left:102.8px;width:0;display:flex;justify-content:center;transform-origin:0 0;"><span style="white-space:nowrap">C</span></span>
<span class="t" style="top:3px;font-size:18.2px;line-height:20px;color:#262626;left:230.8px;width:0;display:flex;justify-content:center;transform-origin:0 0;"><span style="white-space:nowrap">D</span></span>
<span class="t" style="top:3px;font-size:18.2px;line-height:20px;color:#262626;left:358.8px;width:0;display:flex;justify-content:center;transform-origin:0 0;"><span style="white-space:nowrap">E</span></span>
<span class="t" style="top:3px;font-size:18.2px;line-height:20px;color:#262626;left:468.8px;width:0;display:flex;justify-content:center;transform-origin:0 0;"><span style="white-space:nowrap">F</span></span>
<span class="t" style="top:3px;font-size:18.2px;line-height:20px;color:#262626;left:560.8px;width:0;display:flex;justify-content:center;transform-origin:0 0;"><span style="white-space:nowrap">G</span></span>
<span class="t" style="top:3px;font-size:18.2px;line-height:20px;color:#262626;left:652.8px;width:0;display:flex;justify-content:center;transform-origin:0 0;"><span style="white-space:nowrap">H</span></span>
<span class="t" style="top:3px;font-size:18.2px;line-height:20px;color:#262626;left:744.8px;width:0;display:flex;justify-content:center;transform-origin:0 0;"><span style="white-space:nowrap">I</span></span>
<span class="t" style="top:3px;font-size:18.2px;line-height:20px;color:#262626;left:836.8px;width:0;display:flex;justify-content:center;transform-origin:0 0;"><span style="white-space:nowrap">J</span></span>
<span class="t" style="top:3px;font-size:18.2px;line-height:20px;color:#262626;left:928.8px;width:0;display:flex;justify-content:center;transform-origin:0 0;"><span style="white-space:nowrap">K</span></span>
<span class="t" style="top:3px;font-size:18.2px;line-height:20px;color:#262626;left:1020.8px;width:0;display:flex;justify-content:center;transform-origin:0 0;"><span style="white-space:nowrap">L</span></span>
<span class="t" style="top:3px;font-size:18.2px;line-height:20px;color:#262626;left:1112.8px;width:0;display:flex;justify-content:center;transform-origin:0 0;"><span style="white-space:nowrap">M</span></span>
<span class="t" style="top:3px;font-size:18.2px;line-height:20px;color:#262626;left:1204.8px;width:0;display:flex;justify-content:center;transform-origin:0 0;"><span style="white-space:nowrap">N</span></span>
<span class="t" style="top:32px;font-size:18.2px;line-height:20px;color:#262626;left:19px;width:0;display:flex;justify-content:center;transform-origin:0 0;transform:scaleX(0.9932);"><span style="white-space:nowrap">1</span></span>
<span class="t" style="top:60px;font-size:18.2px;line-height:20px;color:#262626;left:19px;width:0;display:flex;justify-content:center;transform-origin:0 0;transform:scaleX(0.9932);"><span style="white-space:nowrap">2</span></span>
<span class="t" style="top:88px;font-size:18.2px;line-height:20px;color:#262626;left:19px;width:0;display:flex;justify-content:center;transform-origin:0 0;transform:scaleX(0.9932);"><span style="white-space:nowrap">3</span></span>
<span class="t" style="top:116px;font-size:18.2px;line-height:20px;color:#262626;left:19px;width:0;display:flex;justify-content:center;transform-origin:0 0;transform:scaleX(0.9932);"><span style="white-space:nowrap">4</span></span>
<span class="t" style="top:144px;font-size:18.2px;line-height:20px;color:#262626;left:19px;width:0;display:flex;justify-content:center;transform-origin:0 0;transform:scaleX(0.9932);"><span style="white-space:nowrap">5</span></span>
<span class="t" style="top:172px;font-size:18.2px;line-height:20px;color:#262626;left:19px;width:0;display:flex;justify-content:center;transform-origin:0 0;transform:scaleX(0.9932);"><span style="white-space:nowrap">6</span></span>
<span class="t" style="top:200px;font-size:18.2px;line-height:20px;color:#262626;left:19px;width:0;display:flex;justify-content:center;transform-origin:0 0;transform:scaleX(0.9932);"><span style="white-space:nowrap">7</span></span>
<span class="t" style="top:228px;font-size:18.2px;line-height:20px;color:#262626;left:19px;width:0;display:flex;justify-content:center;transform-origin:0 0;transform:scaleX(0.9932);"><span style="white-space:nowrap">8</span></span>
<span class="t" style="top:256px;font-size:18.2px;line-height:20px;color:#262626;left:19px;width:0;display:flex;justify-content:center;transform-origin:0 0;transform:scaleX(0.9932);"><span style="white-space:nowrap">9</span></span>
<span class="t" style="top:284px;font-size:18.2px;line-height:20px;color:#262626;left:19px;width:0;display:flex;justify-content:center;transform-origin:0 0;transform:scaleX(0.9516);"><span style="white-space:nowrap">10</span></span>
<span class="t" style="top:312px;font-size:18.2px;line-height:20px;color:#262626;left:19px;width:0;display:flex;justify-content:center;transform-origin:0 0;transform:scaleX(1.0193);"><span style="white-space:nowrap">11</span></span>
<span class="t" style="top:340px;font-size:18.2px;line-height:20px;color:#262626;left:19px;width:0;display:flex;justify-content:center;transform-origin:0 0;transform:scaleX(0.9516);"><span style="white-space:nowrap">12</span></span>
<span class="t" style="top:368px;font-size:18.2px;line-height:20px;color:#262626;left:19px;width:0;display:flex;justify-content:center;transform-origin:0 0;transform:scaleX(0.9516);"><span style="white-space:nowrap">13</span></span>
<span class="t" style="top:396px;font-size:18.2px;line-height:20px;color:#262626;left:19px;width:0;display:flex;justify-content:center;transform-origin:0 0;transform:scaleX(0.9516);"><span style="white-space:nowrap">14</span></span>
<span class="t" style="top:424px;font-size:18.2px;line-height:20px;color:#262626;left:19px;width:0;display:flex;justify-content:center;transform-origin:0 0;transform:scaleX(0.9516);"><span style="white-space:nowrap">15</span></span>
<span class="t" style="top:452px;font-size:18.2px;line-height:20px;color:#262626;left:19px;width:0;display:flex;justify-content:center;transform-origin:0 0;transform:scaleX(0.9516);"><span style="white-space:nowrap">16</span></span>
<span class="t" style="top:480px;font-size:18.2px;line-height:20px;color:#262626;left:19px;width:0;display:flex;justify-content:center;transform-origin:0 0;transform:scaleX(0.9516);"><span style="white-space:nowrap">17</span></span>
<span class="t" style="top:508px;font-size:18.2px;line-height:20px;color:#262626;left:19px;width:0;display:flex;justify-content:center;transform-origin:0 0;transform:scaleX(0.9516);"><span style="white-space:nowrap">18</span></span>
<span class="t" style="top:536px;font-size:18.2px;line-height:20px;color:#262626;left:19px;width:0;display:flex;justify-content:center;transform-origin:0 0;transform:scaleX(0.9516);"><span style="white-space:nowrap">19</span></span>
<span class="t" style="top:564px;font-size:18.2px;line-height:20px;color:#262626;left:19px;width:0;display:flex;justify-content:center;transform-origin:0 0;transform:scaleX(0.9516);"><span style="white-space:nowrap">20</span></span>
<span class="t" style="top:592px;font-size:18.2px;line-height:20px;color:#262626;left:19px;width:0;display:flex;justify-content:center;transform-origin:0 0;transform:scaleX(0.9516);"><span style="white-space:nowrap">21</span></span>
<span class="t" style="top:620px;font-size:18.2px;line-height:20px;color:#262626;left:19px;width:0;display:flex;justify-content:center;transform-origin:0 0;transform:scaleX(0.9516);"><span style="white-space:nowrap">22</span></span>
<div class="a" style="left:38.6px;top:67.5px;width:1.4px;height:7px;background:#6b8fc9;"></div>
<span class="t" style="top:60px;font-size:18.2px;line-height:20px;color:#000;left:45.66px;transform-origin:0 0;transform:scaleX(1.0713);">A Website</span>
<span class="t" style="top:88px;font-size:18.2px;line-height:20px;color:#000;left:59.86px;transform-origin:0 0;transform:scaleX(1.0547);">Start Date</span>
<span class="t" style="top:88px;font-size:18.2px;line-height:20px;color:#000;left:192.06px;transform-origin:0 0;transform:scaleX(1.0123);">End Date</span>
<span class="t" style="top:88px;font-size:18.2px;line-height:20px;color:#000;left:321.06px;transform-origin:0 0;transform:scaleX(1.0847);">Duration</span>
<span class="t" style="top:116px;font-size:18.2px;line-height:20px;color:#000;right:1117.78px;transform-origin:100% 0;transform:scaleX(1.0498);">01-01-21</span>
<span class="t" style="top:116px;font-size:18.2px;line-height:20px;color:#000;right:989.78px;transform-origin:100% 0;transform:scaleX(1.0498);">02-01-21</span>
<span class="t" style="top:116px;font-size:18.2px;line-height:20px;color:#000;right:862.28px;transform-origin:100% 0;transform:scaleX(0.9519);">1</span>
<span class="t" style="top:144px;font-size:18.2px;line-height:20px;color:#000;right:1117.78px;transform-origin:100% 0;transform:scaleX(1.0498);">03-01-21</span>
<span class="t" style="top:144px;font-size:18.2px;line-height:20px;color:#000;right:989.78px;transform-origin:100% 0;transform:scaleX(1.0498);">06-01-21</span>
<span class="t" style="top:144px;font-size:18.2px;line-height:20px;color:#000;right:862.28px;transform-origin:100% 0;transform:scaleX(0.9519);">3</span>
<span class="t" style="top:172px;font-size:18.2px;line-height:20px;color:#000;right:1117.78px;transform-origin:100% 0;transform:scaleX(1.0498);">08-01-21</span>
<span class="t" style="top:172px;font-size:18.2px;line-height:20px;color:#000;right:989.78px;transform-origin:100% 0;transform:scaleX(1.0498);">12-01-21</span>
<span class="t" style="top:172px;font-size:18.2px;line-height:20px;color:#000;right:862.28px;transform-origin:100% 0;transform:scaleX(0.9519);">4</span>
<span class="t" style="top:200px;font-size:18.2px;line-height:20px;color:#000;right:1117.78px;transform-origin:100% 0;transform:scaleX(1.0498);">10-01-21</span>
<span class="t" style="top:200px;font-size:18.2px;line-height:20px;color:#000;right:989.78px;transform-origin:100% 0;transform:scaleX(1.0498);">18-01-21</span>
<span class="t" style="top:200px;font-size:18.2px;line-height:20px;color:#000;right:862.28px;transform-origin:100% 0;transform:scaleX(0.9519);">8</span>
<span class="t" style="top:228px;font-size:18.2px;line-height:20px;color:#000;right:1117.78px;transform-origin:100% 0;transform:scaleX(1.0498);">13-01-21</span>
<span class="t" style="top:228px;font-size:18.2px;line-height:20px;color:#000;right:989.78px;transform-origin:100% 0;transform:scaleX(1.0498);">16-01-21</span>
<span class="t" style="top:228px;font-size:18.2px;line-height:20px;color:#000;right:862.28px;transform-origin:100% 0;transform:scaleX(0.9519);">3</span>
<span class="t" style="top:256px;font-size:18.2px;line-height:20px;color:#000;right:1117.78px;transform-origin:100% 0;transform:scaleX(1.0498);">16-01-21</span>
<span class="t" style="top:256px;font-size:18.2px;line-height:20px;color:#000;right:989.78px;transform-origin:100% 0;transform:scaleX(1.0498);">18-01-21</span>
<span class="t" style="top:256px;font-size:18.2px;line-height:20px;color:#000;right:862.28px;transform-origin:100% 0;transform:scaleX(0.9519);">2</span>
<span class="t" style="top:284px;font-size:18.2px;line-height:20px;color:#000;right:1117.78px;transform-origin:100% 0;transform:scaleX(1.0498);">20-01-21</span>
<span class="t" style="top:284px;font-size:18.2px;line-height:20px;color:#000;right:989.78px;transform-origin:100% 0;transform:scaleX(1.0498);">21-01-21</span>
<span class="t" style="top:284px;font-size:18.2px;line-height:20px;color:#000;right:862.28px;transform-origin:100% 0;transform:scaleX(0.9519);">1</span>
</div>
<div class="a vscroll" style="left:1280px;top:253px;width:26px;height:656px;background:#e6e6e6;">
<div class="a" style="left:3px;top:1.4px;width:19px;height:18.4px;background:#fff;border:1px solid #ababab;"></div>
<svg class="a" style="left:8px;top:6.6px;" width="9.4" height="6" viewBox="0 0 9.4 6"><path d="M0 5.6 L4.7 0.4 L9.4 5.6 Z" fill="#777"/></svg>
<div class="a" style="left:3px;top:20.6px;width:19px;height:559px;background:#fff;border:1px solid #ababab;"></div>
<div class="a" style="left:3px;top:579.6px;width:19px;height:29.6px;background:#d9d9d9;"></div>
<div class="a" style="left:3px;top:609.2px;width:19px;height:18.4px;background:#fff;border:1px solid #ababab;"></div>
<svg class="a" style="left:8px;top:615.6px;" width="9.4" height="6" viewBox="0 0 9.4 6"><path d="M0 0.4 L4.7 5.6 L9.4 0.4 Z" fill="#666"/></svg>
<div class="a" style="left:25px;top:1px;width:1px;height:653px;background:#c6c6c6;"></div>
</div>
<div class="a chart" style="left:438px;top:338px;width:810px;height:440px;">
<div class="a" style="left:7px;top:7px;width:794px;height:424px;background:#fff;border:1px solid #8c8c8c;"></div>
<div class="a" style="left:302px;top:52.3px;width:1px;height:357px;background:#d9d9d9;"></div>
<div class="a" style="left:366px;top:52.3px;width:1px;height:357px;background:#d9d9d9;"></div>
<div class="a" style="left:429.7px;top:52.3px;width:1px;height:357px;background:#d9d9d9;"></div>
<div class="a" style="left:492.9px;top:52.3px;width:1px;height:357px;background:#d9d9d9;"></div>
<div class="a" style="left:556.9px;top:52.3px;width:1px;height:357px;background:#d9d9d9;"></div>
<div class="a" style="left:621px;top:52.3px;width:1px;height:357px;background:#d9d9d9;"></div>
<div class="a" style="left:683.7px;top:52.3px;width:1px;height:357px;background:#d9d9d9;"></div>
<div class="a" style="left:747.9px;top:52.3px;width:1px;height:357px;background:#d9d9d9;"></div>
<span class="t" style="top:20px;font-size:15.4px;line-height:17px;color:#595959;left:302.8px;width:0;display:flex;justify-content:center;transform-origin:0 0;transform:scaleX(1.0112);"><span style="white-space:nowrap">20-12-20</span></span>
<span class="t" style="top:20px;font-size:15.4px;line-height:17px;color:#595959;left:366.8px;width:0;display:flex;justify-content:center;transform-origin:0 0;transform:scaleX(1.0112);"><span style="white-space:nowrap">25-12-20</span></span>
<span class="t" style="top:20px;font-size:15.4px;line-height:17px;color:#595959;left:430.5px;width:0;display:flex;justify-content:center;transform-origin:0 0;transform:scaleX(1.0112);"><span style="white-space:nowrap">30-12-20</span></span>
<span class="t" style="top:20px;font-size:15.4px;line-height:17px;color:#595959;left:493.7px;width:0;display:flex;justify-content:center;transform-origin:0 0;transform:scaleX(1.0112);"><span style="white-space:nowrap">04-01-21</span></span>
<span class="t" style="top:20px;font-size:15.4px;line-height:17px;color:#595959;left:557.7px;width:0;display:flex;justify-content:center;transform-origin:0 0;transform:scaleX(1.0112);"><span style="white-space:nowrap">09-01-21</span></span>
<span class="t" style="top:20px;font-size:15.4px;line-height:17px;color:#595959;left:621.8px;width:0;display:flex;justify-content:center;transform-origin:0 0;transform:scaleX(1.0112);"><span style="white-space:nowrap">14-01-21</span></span>
<span class="t" style="top:20px;font-size:15.4px;line-height:17px;color:#595959;left:684.5px;width:0;display:flex;justify-content:center;transform-origin:0 0;transform:scaleX(1.0112);"><span style="white-space:nowrap">19-01-21</span></span>
<span class="t" style="top:20px;font-size:15.4px;line-height:17px;color:#595959;left:748.7px;width:0;display:flex;justify-content:center;transform-origin:0 0;transform:scaleX(1.0112);"><span style="white-space:nowrap">24-01-21</span></span>
<span class="t" style="top:68px;font-size:15.4px;line-height:17px;color:#595959;right:523.44px;transform-origin:100% 0;transform:scaleX(1.0546);">Goal identification</span>
<div class="a" style="left:456px;top:67px;width:12px;height:21px;background:#ed7d31;"></div>
<span class="t" style="top:119px;font-size:15.4px;line-height:17px;color:#595959;right:523.44px;transform-origin:100% 0;transform:scaleX(1.0457);">Scope definition and timeline creation</span>
<div class="a" style="left:481.2px;top:118px;width:37.8px;height:21px;background:#ed7d31;"></div>
<span class="t" style="top:170px;font-size:15.4px;line-height:17px;color:#595959;right:523.44px;transform-origin:100% 0;transform:scaleX(1.0425);">Sitemap and wireframe creation</span>
<div class="a" style="left:545px;top:169px;width:51px;height:21px;background:#ed7d31;"></div>
<span class="t" style="top:221px;font-size:15.4px;line-height:17px;color:#595959;right:523.44px;transform-origin:100% 0;transform:scaleX(1.0574);">Content creation</span>
<div class="a" style="left:570px;top:220px;width:102px;height:21px;background:#ed7d31;"></div>
<span class="t" style="top:272px;font-size:15.4px;line-height:17px;color:#595959;right:523.44px;transform-origin:100% 0;transform:scaleX(1.0516);">Visual elements determination</span>
<div class="a" style="left:608px;top:271px;width:39px;height:21px;background:#ed7d31;"></div>
<span class="t" style="top:323px;font-size:15.4px;line-height:17px;color:#595959;right:523.44px;transform-origin:100% 0;transform:scaleX(1.0540);">Website testing</span>
<div class="a" style="left:647px;top:322px;width:25px;height:21px;background:#ed7d31;"></div>
<span class="t" style="top:374px;font-size:15.4px;line-height:17px;color:#595959;right:523.44px;transform-origin:100% 0;transform:scaleX(1.0416);">Website launch</span>
<div class="a" style="left:698px;top:374px;width:12px;height:20px;background:#ed7d31;"></div>
<div class="a" style="left:0.8px;top:1px;width:14px;height:14px;background:#fff;border:2.3px solid #8f8f8f;border-radius:7px;"></div>
<div class="a" style="left:397.7px;top:1px;width:14px;height:14px;background:#fff;border:2.3px solid #8f8f8f;border-radius:7px;"></div>
<div class="a" style="left:793.8px;top:1px;width:14px;height:14px;background:#fff;border:2.3px solid #8f8f8f;border-radius:7px;"></div>
<div class="a" style="left:0.8px;top:212.4px;width:14px;height:14px;background:#fff;border:2.3px solid #8f8f8f;border-radius:7px;"></div>
<div class="a" style="left:793.8px;top:212.4px;width:14px;height:14px;background:#fff;border:2.3px solid #8f8f8f;border-radius:7px;"></div>
<div class="a" style="left:0.8px;top:423.8px;width:14px;height:14px;background:#fff;border:2.3px solid #8f8f8f;border-radius:7px;"></div>
<div class="a" style="left:397.7px;top:423.8px;width:14px;height:14px;background:#fff;border:2.3px solid #8f8f8f;border-radius:7px;"></div>
<div class="a" style="left:793.8px;top:423.8px;width:14px;height:14px;background:#fff;border:2.3px solid #8f8f8f;border-radius:7px;"></div>
</div>
<div class="a pane" style="left:1306px;top:253px;width:354px;height:656px;background:#e6e6e6;">
<span class="t" style="top:13px;font-size:27.4px;line-height:31px;color:#217346;left:14.58px;transform-origin:0 0;transform:scaleX(0.9381);-webkit-text-stroke:0.55px #e6e6e6;">Format Axis</span>
<svg class="a" style="left:269.5px;top:23px;" width="12" height="7" viewBox="0 0 12 7"><path d="M0 0.2 H11.6 L5.8 6.4 Z" fill="#555"/></svg>
<svg class="a" style="left:321px;top:20px;" width="13" height="13" viewBox="0 0 13 13"><path d="M0.8 0.8 L11.8 11.8 M11.8 0.8 L0.8 11.8" stroke="#444" stroke-width="1.6" fill="none"/></svg>
<span class="t" style="top:61px;font-size:15px;line-height:17px;color:#222;font-weight:bold;left:19.47px;transform-origin:0 0;transform:scaleX(0.9712);">Axis Options</span>
<svg class="a" style="left:117.4px;top:66px;" width="14" height="9" viewBox="0 0 14 9"><path d="M1 1 L6.6 7 L12.2 1" fill="none" stroke="#2b88d8" stroke-width="1.5"/></svg>
<div class="a" style="left:145px;top:59px;width:1px;height:20.4px;background:#d0d0d0;"></div>
<span class="t" style="top:61px;font-size:15px;line-height:17px;color:#333;left:151.88px;transform-origin:0 0;transform:scaleX(1.0129);">Text Options</span>
<svg class="a" style="left:21px;top:98px;" width="30" height="29" viewBox="0 0 30 29"><path d="M2.2 15.8 L11.4 6.4 L22.4 15.6 L12 26 Z" fill="#fff" stroke="#666" stroke-width="1.3" stroke-linejoin="round"/><path d="M12.2 10.8 V4.2 C12.2 0.6 8.6 0.6 8.6 4.2 V9" fill="none" stroke="#666" stroke-width="1.2"/><circle cx="12.2" cy="11.4" r="1.4" fill="#666"/><path d="M17.6 9.4 C24.6 10 28.8 15 26.6 21.4 C25.6 23.4 24.4 25 23.2 26 C23.6 22 23.4 18.6 22.2 15.6 Z" fill="#777"/></svg>
<svg class="a" style="left:69px;top:97px;" width="27" height="30" viewBox="0 0 27 30"><path d="M13.2 1.6 L24.4 10.2 L20 22.4 H6.4 L2 10.2 Z" fill="#fff" stroke="#666" stroke-width="1.2" stroke-linejoin="round"/><path d="M5.4 23 H21 L22.6 28.2 H3.8 Z" fill="#f4f4f4"/><path d="M6.2 22.6 H20.2" stroke="#666" stroke-width="1.6"/></svg>
<svg class="a" style="left:117px;top:98px;" width="29" height="30" viewBox="0 0 29 30"><g fill="none" stroke="#666" stroke-width="1.1"><path d="M8.6 3.6 H26 M8.6 1.2 V6 M26 1.2 V6"/><path d="M3.4 9.6 V26.8 M1 9.6 H5.8 M1 26.8 H5.8"/></g><rect x="8" y="8.4" width="18.8" height="18.6" rx="1.6" fill="#6e6e6e"/><g fill="none" stroke="#fff" stroke-width="1.1"><path d="M10.4 17.8 H24.4 M17.4 10.8 V24.8"/><path d="M12.2 16 L10.4 17.8 L12.2 19.6 M22.6 16 L24.4 17.8 L22.6 19.6 M15.6 12.6 L17.4 10.8 L19.2 12.6 M15.6 23 L17.4 24.8 L19.2 23"/></g></svg>
<div class="a" style="left:160px;top:93px;width:38px;height:38px;background:#ababab;"></div>
<div class="a" style="left:166px;top:106.3px;width:8px;height:18.8px;background:#217346;"></div>
<div class="a" style="left:175.2px;top:99px;width:7.8px;height:26.1px;background:#217346;"></div>
<div class="a" style="left:184.1px;top:103px;width:8px;height:22.1px;background:#217346;"></div>
<svg class="a" style="left:14px;top:137px;" width="327" height="13" viewBox="0 0 327 13"><path d="M0 11.5 H156.4 L164.2 2.6 L172 11.5 H326" fill="none" stroke="#c4c4c4" stroke-width="1"/></svg>
<svg class="a" style="left:23px;top:161px;" width="10" height="10" viewBox="0 0 10 10"><path d="M9.2 0.6 V9.4 H0.4 Z" fill="#444"/></svg>
<span class="t" style="top:158px;font-size:15px;line-height:17px;color:#217346;font-weight:bold;left:41.88px;transform-origin:0 0;transform:scaleX(0.9669);">Axis Options</span>
<span class="t" style="top:186px;font-size:14.8px;line-height:16px;color:#404040;left:41.88px;transform-origin:0 0;transform:scaleX(0.9898);">Axis Type</span>
<div class="a" style="left:55.1px;top:222.1px;width:14.8px;height:14.8px;background:#fff;border:1.2px solid #ababab;border-radius:7.4px;"></div>
<div class="a" style="left:58.9px;top:225.9px;width:7.2px;height:7.2px;background:#767676;border-radius:3.6px;"></div>
<span class="t" style="top:222px;font-size:14.8px;line-height:16px;color:#404040;left:75.78px;transform-origin:0 0;transform:scaleX(1.0190);">Automaticall<u>y</u> select based on data</span>
<div class="a" style="left:55.1px;top:251px;width:14.8px;height:14.8px;background:#fff;border:1.2px solid #ababab;border-radius:7.4px;"></div>
<span class="t" style="top:251px;font-size:14.8px;line-height:16px;color:#404040;left:75.78px;transform-origin:0 0;transform:scaleX(0.9975);"><u>T</u>ext axis</span>
<div class="a" style="left:55.1px;top:280.2px;width:14.8px;height:14.8px;background:#fff;border:1.2px solid #ababab;border-radius:7.4px;"></div>
<span class="t" style="top:280px;font-size:14.8px;line-height:16px;color:#404040;left:75.78px;transform-origin:0 0;transform:scaleX(0.9957);">Date a<u>x</u>is</span>
<span class="t" style="top:310px;font-size:14.8px;line-height:16px;color:#404040;left:41.88px;transform-origin:0 0;transform:scaleX(0.9888);">Horizontal axis crosses</span>
<div class="a" style="left:55.1px;top:346.2px;width:14.8px;height:14.8px;background:#fff;border:1.2px solid #ababab;border-radius:7.4px;"></div>
<div class="a" style="left:58.9px;top:350px;width:7.2px;height:7.2px;background:#767676;border-radius:3.6px;"></div>
<span class="t" style="top:346px;font-size:14.8px;line-height:16px;color:#404040;left:75.78px;transform-origin:0 0;transform:scaleX(1.0551);">Aut<u>o</u>matic</span>
<div class="a" style="left:55.1px;top:384px;width:14.8px;height:14.8px;background:#fff;border:1.2px solid #ababab;border-radius:7.4px;"></div>
<span class="t" style="top:374px;font-size:14.8px;line-height:16px;color:#404040;left:75.78px;transform-origin:0 0;transform:scaleX(1.0329);">At cat<u>e</u>gory</span>
<span class="t" style="top:394px;font-size:14.8px;line-height:16px;color:#404040;left:75.78px;transform-origin:0 0;transform:scaleX(1.0192);">number</span>
<div class="a" style="left:219.9px;top:380px;width:94.4px;height:22px;background:#efefed;"></div>
<span class="t" style="top:384px;font-size:13px;line-height:15px;color:#a6a6a6;left:226.2px;transform-origin:0 0;">1</span>
<div class="a" style="left:55.1px;top:422.3px;width:14.8px;height:14.8px;background:#fff;border:1.2px solid #ababab;border-radius:7.4px;"></div>
<span class="t" style="top:422px;font-size:14.8px;line-height:16px;color:#404040;left:75.78px;transform-origin:0 0;transform:scaleX(1.0303);">At maximum cate<u>g</u>ory</span>
<span class="t" style="top:452px;font-size:14.8px;line-height:16px;color:#404040;left:41.88px;transform-origin:0 0;transform:scaleX(1.0236);">Axis position</span>
<div class="a" style="left:55.1px;top:488.1px;width:14.8px;height:14.8px;background:#fff;border:1.2px solid #ababab;border-radius:7.4px;"></div>
<span class="t" style="top:488px;font-size:14.8px;line-height:16px;color:#404040;left:75.78px;transform-origin:0 0;transform:scaleX(0.9875);">On tic<u>k</u> marks</span>
<div class="a" style="left:55.1px;top:517.1px;width:14.8px;height:14.8px;background:#fff;border:1.2px solid #ababab;border-radius:7.4px;"></div>
<div class="a" style="left:58.9px;top:520.9px;width:7.2px;height:7.2px;background:#767676;border-radius:3.6px;"></div>
<span class="t" style="top:517px;font-size:14.8px;line-height:16px;color:#404040;left:75.78px;transform-origin:0 0;transform:scaleX(0.9933);">Bet<u>w</u>een tick marks</span>
<div class="a" style="left:42.4px;top:546.6px;width:15.4px;height:15px;background:#fff;border:1.2px solid #8a8a8a;"></div>
<svg class="a" style="left:44px;top:548.6px;" width="13" height="12" viewBox="0 0 13 12"><path d="M1.4 6 L4.8 9.8 L11 1.4" fill="none" stroke="#555" stroke-width="1.3"/></svg>
<span class="t" style="top:547px;font-size:14.8px;line-height:16px;color:#404040;left:63.48px;transform-origin:0 0;transform:scaleX(0.9969);"><u>C</u>ategories in reverse order</span>
<svg class="a" style="left:24px;top:591px;" width="8" height="12" viewBox="0 0 8 12"><path d="M1.2 0.6 L6.8 5.6 L1.2 10.6 Z" fill="#fff" stroke="#777" stroke-width="1"/></svg>
<span class="t" style="top:589px;font-size:15px;line-height:17px;color:#333;font-weight:bold;left:41.88px;transform-origin:0 0;transform:scaleX(0.9737);">Tick Marks</span>
<svg class="a" style="left:24px;top:622px;" width="8" height="12" viewBox="0 0 8 12"><path d="M1.2 0.6 L6.8 5.6 L1.2 10.6 Z" fill="#fff" stroke="#777" stroke-width="1"/></svg>
<span class="t" style="top:620px;font-size:15px;line-height:17px;color:#333;font-weight:bold;left:41.88px;transform-origin:0 0;transform:scaleX(0.9289);">Labels</span>
<div class="a" style="left:320.3px;top:156.7px;width:18.6px;height:18px;background:#fff;border:1px solid #ababab;"></div>
<svg class="a" style="left:325px;top:161.7px;" width="9.4" height="6" viewBox="0 0 9.4 6"><path d="M0 5.6 L4.7 0.4 L9.4 5.6 Z" fill="#666"/></svg>
<div class="a" style="left:320.3px;top:175.4px;width:18.6px;height:407px;background:#fff;border:1px solid #ababab;"></div>
<div class="a" style="left:320.3px;top:582.4px;width:18.6px;height:32px;background:#d9d9d9;"></div>
<div class="a" style="left:320.3px;top:614.4px;width:18.6px;height:18.4px;background:#fff;border:1px solid #ababab;"></div>
<svg class="a" style="left:325px;top:620.6px;" width="9.4" height="6" viewBox="0 0 9.4 6"><path d="M0 0.4 L4.7 5.6 L9.4 0.4 Z" fill="#666"/></svg>
</div>
<div class="a edge" style="left:1660px;top:253px;width:2px;height:656px;background:#e6e6e6;">
<div class="a" style="left:1px;top:0px;width:1px;height:656px;background:#777;"></div>
</div>
<div class="a tabbar" style="left:0px;top:880px;width:1280px;height:29px;background:#e6e6e6;">
<div class="a" style="left:0px;top:0px;width:1280px;height:1px;background:#a9a9a9;"></div>
<svg class="a" style="left:26px;top:9.6px;" width="7" height="10" viewBox="0 0 7 10"><path d="M6.4 0.4 V9.2 L0.4 4.8 Z" fill="#c2c2c2"/></svg>
<svg class="a" style="left:55.4px;top:9.6px;" width="7" height="10" viewBox="0 0 7 10"><path d="M0.4 0.4 V9.2 L6.4 4.8 Z" fill="#c2c2c2"/></svg>
<div class="a" style="left:102.2px;top:0px;width:78.8px;height:25.8px;background:#fff;border:1px solid #b4b4b4;border-top:none;border-bottom:none;"></div>
<div class="a" style="left:102.2px;top:24px;width:78.8px;height:2px;background:#217346;"></div>
<span class="t" style="top:2px;font-size:17px;line-height:19px;color:#217346;font-weight:bold;left:113.81px;transform-origin:0 0;transform:scaleX(0.9882);">Sheet1</span>
<svg class="a" style="left:213px;top:4px;" width="22" height="22" viewBox="0 0 22 22"><circle cx="10.8" cy="10.8" r="9.4" fill="none" stroke="#8a8a8a" stroke-width="1.3"/><path d="M5.6 10.8 H16 M10.8 5.6 V16" stroke="#6a6a6a" stroke-width="1.6" fill="none"/></svg>
<div class="a" style="left:779.6px;top:8.4px;width:3px;height:3px;background:#b4b4b4;"></div>
<div class="a" style="left:779.6px;top:13.4px;width:3px;height:3px;background:#b4b4b4;"></div>
<div class="a" style="left:779.6px;top:18.4px;width:3px;height:3px;background:#b4b4b4;"></div>
<div class="a" style="left:798px;top:5.2px;width:481.6px;height:18.6px;background:#d9d9d9;"></div>
<div class="a" style="left:816px;top:5.2px;width:446px;height:18.6px;background:#d9d9d9;"></div>
<div class="a" style="left:798px;top:5.2px;width:18.8px;height:18.6px;background:#fff;border:1px solid #ababab;"></div>
<svg class="a" style="left:804px;top:9.8px;" width="6" height="9.6" viewBox="0 0 6 9.6"><path d="M5.6 0.2 V9.4 L0.4 4.8 Z" fill="#555"/></svg>
<div class="a" style="left:873.2px;top:5.2px;width:332.6px;height:18.6px;background:#fff;border:1px solid #ababab;"></div>
<div class="a" style="left:1261.2px;top:5.2px;width:18.6px;height:18.6px;background:#fff;border:1px solid #ababab;"></div>
<svg class="a" style="left:1267.6px;top:9.8px;" width="6" height="9.6" viewBox="0 0 6 9.6"><path d="M0.4 0.2 V9.4 L5.6 4.8 Z" fill="#555"/></svg>
</div>
<div class="a statusbar" style="left:0px;top:909px;width:1662px;height:28px;background:#f3f2f1;">
<div class="a" style="left:0px;top:0px;width:1662px;height:1px;background:#c8c8c8;"></div>
<span class="t" style="top:8px;font-size:12.7px;line-height:14px;color:#444;left:9.16px;transform-origin:0 0;transform:scaleX(0.9891);">Ready</span>
<div class="a" style="left:1275px;top:1px;width:49.8px;height:27px;background:#c8c6c4;"></div>
<svg class="a" style="left:1291px;top:5.3px;" width="17" height="17" viewBox="0 0 17 17"><rect x="0.9" y="0.9" width="15" height="14.6" fill="#d6d4d2" stroke="#3b3b3b" stroke-width="1.8"/><path d="M5.9 0.9 V15.5 M10.9 0.9 V15.5 M0.9 5.8 H15.9 M0.9 10.6 H15.9" stroke="#3b3b3b" stroke-width="1.7" fill="none"/></svg>
<svg class="a" style="left:1341px;top:5px;" width="19" height="17" viewBox="0 0 19 17"><rect x="0.9" y="0.9" width="16.2" height="15" fill="none" stroke="#666" stroke-width="1.5"/><rect x="4.8" y="3.6" width="8.6" height="9.6" fill="#e0e0e0" stroke="#444" stroke-width="1.3"/><path d="M6 6.8 H12.2 M6 9.8 H12.2" stroke="#555" stroke-width="1.1"/></svg>
<svg class="a" style="left:1391px;top:5px;" width="19" height="17" viewBox="0 0 19 17"><rect x="0.9" y="0.9" width="16.2" height="15" fill="none" stroke="#666" stroke-width="1.5"/><path d="M5.4 0.9 V9.2 M11 0.9 V9.2 H0.9" stroke="#666" stroke-width="1.4" fill="none"/></svg>
<div class="a" style="left:1431.8px;top:12.7px;width:10px;height:1.4px;background:#444;"></div>
<div class="a" style="left:1448px;top:13.6px;width:124.8px;height:1px;background:#9a9a9a;"></div>
<div class="a" style="left:1510.8px;top:7px;width:6px;height:13.6px;background:#777;"></div>
<div class="a" style="left:1579.2px;top:13px;width:9.6px;height:1.3px;background:#555;"></div>
<div class="a" style="left:1583.4px;top:8.8px;width:1.3px;height:9.6px;background:#555;"></div>
<span class="t" style="top:8px;font-size:12.7px;line-height:14px;color:#444;left:1605.16px;transform-origin:0 0;transform:scaleX(0.9928);">115%</span>
<div class="a" style="left:1661px;top:0px;width:1px;height:28px;background:#777;"></div>
</div>
</body></html>
